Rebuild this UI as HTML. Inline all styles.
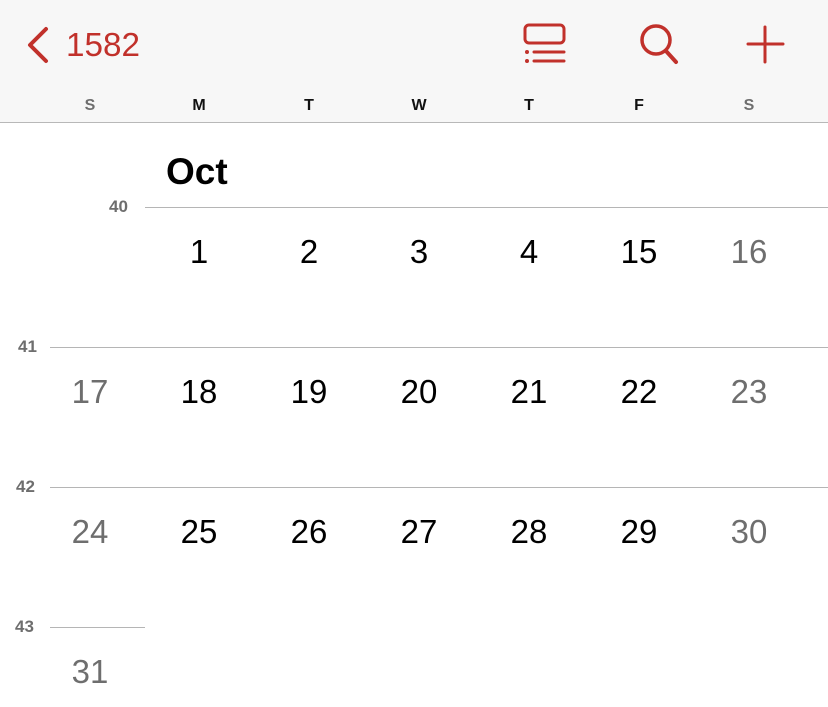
<!DOCTYPE html>
<html><head><meta charset="utf-8"><style>
body{margin:0;width:828px;height:707px;background:#fff;font-family:"Liberation Sans",sans-serif;position:relative;overflow:hidden}
.hdr{position:absolute;left:0;top:0;width:828px;height:122px;background:#f7f7f7;border-bottom:1px solid #b8b8b8}
.a{position:absolute}
.dw{position:absolute;top:97px;width:40px;margin-left:-20px;text-align:center;font-size:16px;font-weight:bold;color:#111}
.g{color:#6e6e6e}
.n{position:absolute;width:80px;margin-left:-40px;text-align:center;font-size:33px;color:#000;line-height:40px}
.n.g{color:#6e6e6e}
.ln{position:absolute;height:1px;background:#b5b5b5}
.wk{position:absolute;font-size:17px;font-weight:bold;color:#6e6e6e;line-height:20px}
</style></head><body>
<div class="hdr"></div>
<svg class="a" style="left:0;top:0" width="828" height="122">
<g stroke="#c1312b" stroke-width="4" fill="none" stroke-linecap="round" stroke-linejoin="round">
<path d="M46 29 L30 45 L46 61"/>
<rect x="525" y="25" width="39" height="18" rx="4" stroke-width="3"/>
<path d="M534 52 H564 M534 61 H564" stroke-width="3"/>
<circle cx="656" cy="40" r="14" stroke-width="3.5"/>
<path d="M666 51 L676 62" stroke-width="4"/>
<path d="M765 27 V62 M748 44 H783" stroke-width="3"/>
</g>
<circle cx="527" cy="52" r="2" fill="#c1312b"/><circle cx="527" cy="61" r="2" fill="#c1312b"/>
<text x="66" y="56" font-family="Liberation Sans" font-size="33" fill="#c1312b" textLength="74" lengthAdjust="spacingAndGlyphs">1582</text>
</svg>
<div class="dw g" style="left:90px">S</div>
<div class="dw" style="left:199px">M</div>
<div class="dw" style="left:309px">T</div>
<div class="dw" style="left:419px">W</div>
<div class="dw" style="left:529px">T</div>
<div class="dw" style="left:639px">F</div>
<div class="dw g" style="left:749px">S</div>

<div class="a" style="left:166px;top:151px;font-size:37px;font-weight:bold;color:#000">Oct</div>

<div class="ln" style="left:145px;top:207px;width:683px"></div>
<div class="ln" style="left:50px;top:347px;width:778px"></div>
<div class="ln" style="left:50px;top:487px;width:778px"></div>
<div class="ln" style="left:50px;top:627px;width:95px"></div>
<div class="wk" style="left:109px;top:197px">40</div>
<div class="wk" style="left:18px;top:337px">41</div>
<div class="wk" style="left:16px;top:477px">42</div>
<div class="wk" style="left:15px;top:617px">43</div>

<div class="n" style="left:199px;top:232px">1</div>
<div class="n" style="left:309px;top:232px">2</div>
<div class="n" style="left:419px;top:232px">3</div>
<div class="n" style="left:529px;top:232px">4</div>
<div class="n" style="left:639px;top:232px">15</div>
<div class="n g" style="left:749px;top:232px">16</div>

<div class="n g" style="left:90px;top:372px">17</div>
<div class="n" style="left:199px;top:372px">18</div>
<div class="n" style="left:309px;top:372px">19</div>
<div class="n" style="left:419px;top:372px">20</div>
<div class="n" style="left:529px;top:372px">21</div>
<div class="n" style="left:639px;top:372px">22</div>
<div class="n g" style="left:749px;top:372px">23</div>

<div class="n g" style="left:90px;top:512px">24</div>
<div class="n" style="left:199px;top:512px">25</div>
<div class="n" style="left:309px;top:512px">26</div>
<div class="n" style="left:419px;top:512px">27</div>
<div class="n" style="left:529px;top:512px">28</div>
<div class="n" style="left:639px;top:512px">29</div>
<div class="n g" style="left:749px;top:512px">30</div>

<div class="n g" style="left:90px;top:652px">31</div>
</body></html>
